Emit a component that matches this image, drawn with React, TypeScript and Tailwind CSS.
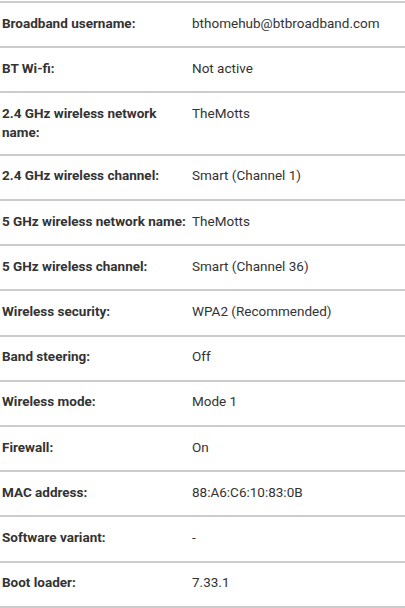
const rows: { label: string; value: string }[] = [
  { label: "Broadband username:", value: "bthomehub@btbroadband.com" },
  { label: "BT Wi-fi:", value: "Not active" },
  { label: "2.4 GHz wireless network name:", value: "TheMotts" },
  { label: "2.4 GHz wireless channel:", value: "Smart (Channel 1)" },
  { label: "5 GHz wireless network name:", value: "TheMotts" },
  { label: "5 GHz wireless channel:", value: "Smart (Channel 36)" },
  { label: "Wireless security:", value: "WPA2 (Recommended)" },
  { label: "Band steering:", value: "Off" },
  { label: "Wireless mode:", value: "Mode 1" },
  { label: "Firewall:", value: "On" },
  { label: "MAC address:", value: "88:A6:C6:10:83:0B" },
  { label: "Software variant:", value: "-" },
  { label: "Boot loader:", value: "7.33.1" },
];

export default function App() {
  return (
    <div className="min-h-[608px] w-[405px] bg-white pt-px font-['Roboto',sans-serif] text-[13.5px] leading-[19.5px] text-[#333333]">
      <div className="border-b-2 border-[#cccccc]">
        {rows.map((row) => (
          <div
            key={row.label}
            className="grid min-h-[45.2px] grid-cols-[192px_1fr] border-t-2 border-[#cccccc] pt-[10.5px] pb-[11px]"
          >
            <div className="pl-[2px] pr-1 font-bold">{row.label}</div>
            <div>{row.value}</div>
          </div>
        ))}
      </div>
    </div>
  );
}
